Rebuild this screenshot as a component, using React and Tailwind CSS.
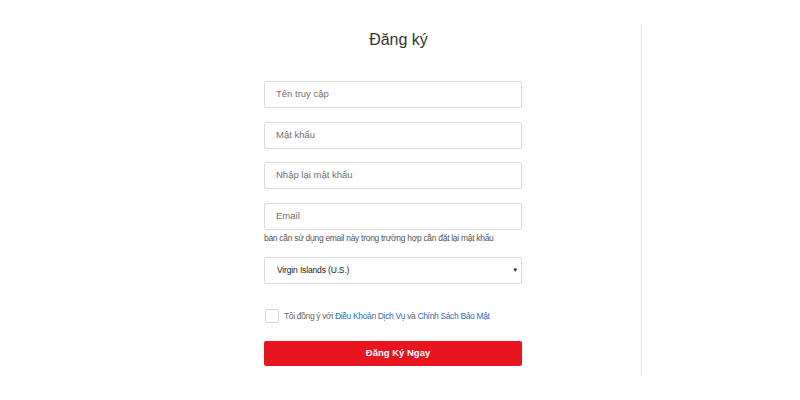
import React from "react";

const font = { fontFamily: '"Liberation Sans", Arial, sans-serif' };

function Field({ placeholder, className = "" }) {
  return (
    <div
      className={`h-[27px] w-[258px] rounded-[2px] border border-[#dcdcdc] bg-white flex items-center pl-[11px] text-[9.5px] text-[#707070] ${className}`}
    >
      {placeholder}
    </div>
  );
}

export default function App() {
  return (
    <div className="w-[800px] h-[400px] bg-white flex" style={font}>
      <div className="w-[641px] shrink-0 pl-[264px]">
        <div className="w-[258px] pt-[30px]">
          <div className="h-[20px] flex items-center justify-center pl-[11px] text-[16px] text-[#333] leading-[20px]">
            Đăng ký
          </div>
          <Field placeholder="Tên truy cập" className="mt-[31px]" />
          <Field placeholder="Mật khẩu" className="mt-[14px]" />
          <Field placeholder="Nhập lại mật khẩu" className="mt-[13px]" />
          <Field placeholder="Email" className="mt-[14px]" />
          <div className="mt-[2px] h-[12px] leading-[12px] text-[8.5px] tracking-[-0.3px] text-[#555] whitespace-nowrap">
            ban cần sử dụng email này trong trường hợp cần đặt lại mật khẩu
          </div>
          <div className="mt-[13px] h-[27px] w-[258px] rounded-[2px] border border-[#dcdcdc] bg-white flex items-center justify-between pl-[12px] pr-[3px] text-[8.5px] tracking-[-0.15px] text-[#222]">
            <span>Virgin Islands (U.S.)</span>
            <span className="text-[6px] text-[#222]">▼</span>
          </div>
          <div className="mt-[25px] h-[14px] flex items-center">
            <div className="ml-[1px] w-[14px] h-[14px] rounded-[2px] border border-[#d4d4d4] bg-white" />
            <div className="ml-[5px] text-[8.5px] tracking-[-0.35px] text-[#666] whitespace-nowrap">
              Tôi đồng ý với <span className="text-[#2f6fb5]">Điều Khoản Dịch Vụ</span> và{" "}
              <span className="text-[#2f6fb5]">Chính Sách Bảo Mật</span>
            </div>
          </div>
          <div className="mt-[18px] h-[25px] w-[258px] rounded-[2px] bg-[#e8141f] flex items-center justify-center pl-[10px] text-[9.5px] font-bold text-white">
            Đăng Ký Ngay
          </div>
        </div>
      </div>
      <div className="mt-[24px] h-[352px] w-[1px] bg-[#e6e6e6]" />
    </div>
  );
}
